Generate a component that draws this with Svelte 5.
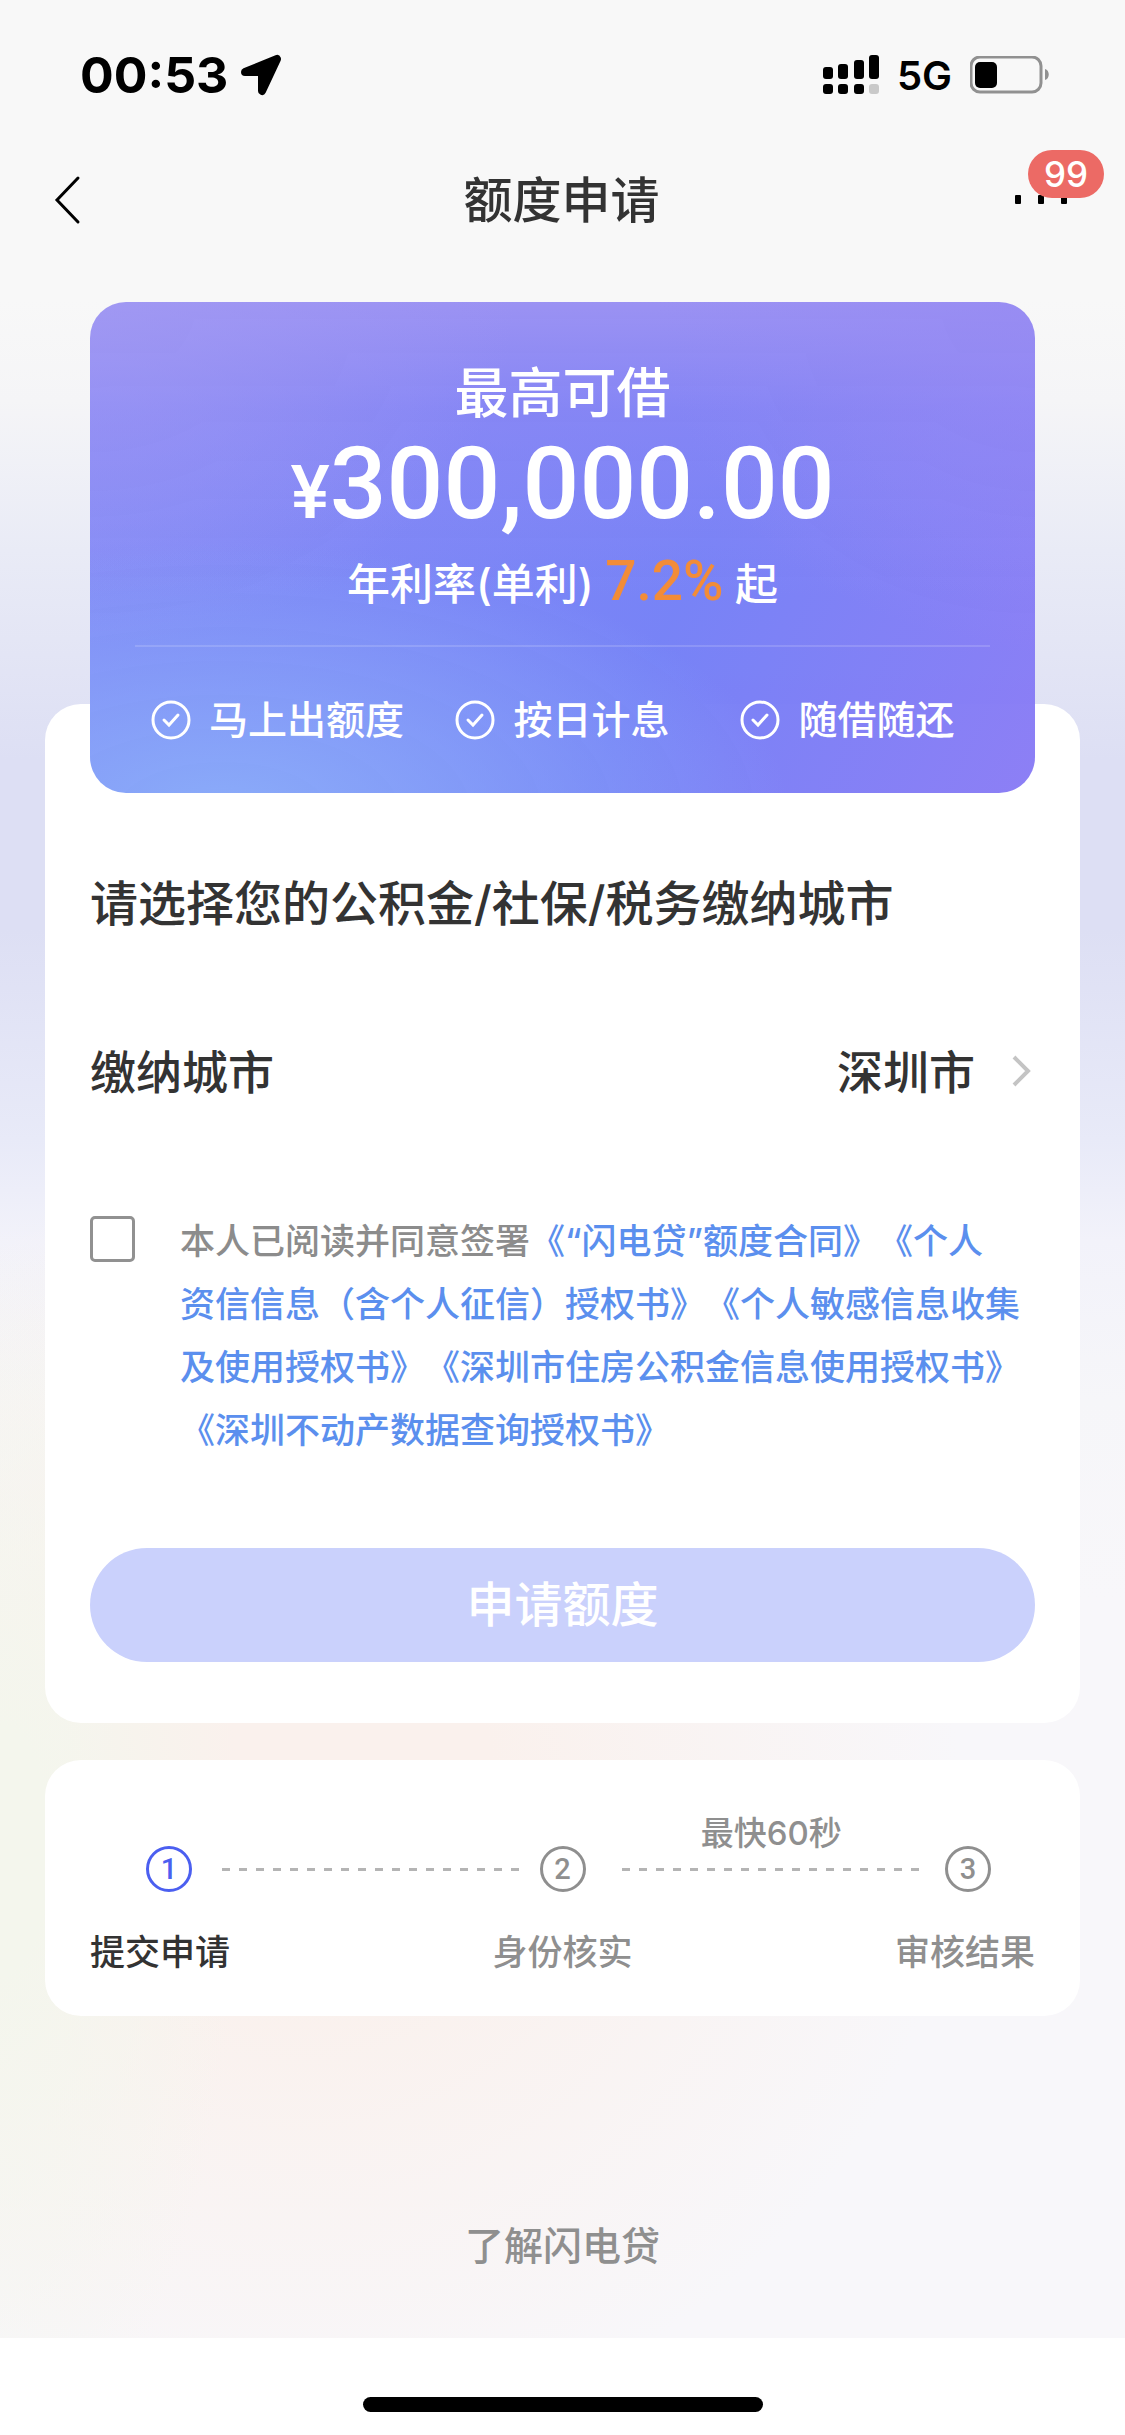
<script>
  let agreed = false

  const features = ['马上出额度', '按日计息', '随借随还']
  const steps = ['提交申请', '身份核实', '审核结果']
  const signal = [
    { x: 0, y: 12, height: 12 },
    { x: 15, y: 9, height: 15 },
    { x: 31, y: 5, height: 19 },
    { x: 46, y: 0, height: 24 },
  ]
</script>

<div class="page">
  <div class="status-bar">
    <div class="clock">
      <span class="time">00:53</span>
      <svg width="42" height="42" viewBox="0 0 42 42">
        <path d="M37 5 L22 37 V18 H5 Z" stroke="#000" stroke-width="8" stroke-linejoin="round" />
      </svg>
    </div>
    <div class="indicators">
      <svg width="56" height="40" viewBox="0 0 56 40">
        {#each signal as bar, i}
          <rect x={bar.x} y={bar.y} width="10" height={bar.height} rx="3" />
          <rect x={bar.x} y="29" width="10" height="10" rx="3" fill={i === 3 ? '#c9c9c9' : '#000'} />
        {/each}
      </svg>
      <span class="network">5G</span>
      <svg width="80" height="38" viewBox="0 0 80 38">
        <rect x="1" y="1" width="70" height="35" rx="9" fill="none" stroke="#919191" stroke-width="3" />
        <rect x="5" y="6" width="22" height="26" rx="5" />
        <path d="M75 13 C80 14 80 23 75 24 Z" fill="#919191" />
      </svg>
    </div>
  </div>

  <header class="nav">
    <button class="back" aria-label="返回">
      <svg width="28" height="50" viewBox="0 0 28 50">
        <path d="M24 3 L3 25 L24 47" fill="none" stroke="#000" stroke-width="3" stroke-linecap="round" />
      </svg>
    </button>
    <h1>额度申请</h1>
    <button class="more" aria-label="更多">
      <svg width="54" height="10" viewBox="0 0 54 10">
        <rect x="0" width="6" height="9" rx="1" />
        <rect x="23" width="6" height="9" rx="1" />
        <rect x="46" width="6" height="9" rx="1" />
      </svg>
      <span class="badge">99</span>
    </button>
  </header>

  <main>
    <section class="hero">
      <h2>最高可借</h2>
      <p class="amount"><span class="currency">¥</span>300,000.00</p>
      <p class="rate">年利率(单利) <strong>7.2%</strong> 起</p>
      <ul class="features">
        {#each features as feature}
          <li>
            <svg width="40" height="40" viewBox="0 0 40 40" fill="none" stroke="#fff">
              <circle cx="20" cy="20" r="18" stroke-width="3" />
              <path d="M13 20 L18 25 L27 15" stroke-width="3" stroke-linecap="round" />
            </svg>
            {feature}
          </li>
        {/each}
      </ul>
    </section>

    <section class="card form">
      <h3>请选择您的公积金/社保/税务缴纳城市</h3>
      <button class="city">
        <span>缴纳城市</span>
        <span class="value">深圳市</span>
        <svg width="24" height="36" viewBox="0 0 24 36">
          <path d="M3 3 L17 17 L3 31" fill="none" stroke="#c4c4c4" stroke-width="4" />
        </svg>
      </button>
      <div class="agreement">
        <input id="agree" type="checkbox" bind:checked={agreed} />
        <p>
          <label for="agree">本人已阅读并同意签署</label><a href="#contract">《“闪电贷”额度合同》</a><a
            href="#credit">《个人<br />资信信息（含个人征信）授权书》</a
          ><a href="#sensitive">《个人敏感信息收集及使用授权书》</a><a href="#fund"
            >《深圳市住房公积金信息使用授权书》</a
          ><a href="#estate">《深圳不动产数据查询授权书》</a>
        </p>
      </div>
      <button class="submit" disabled={!agreed}>申请额度</button>
    </section>

    <section class="card steps">
      <div class="track">
        <span class="dot active">1</span>
        <div class="line"></div>
        <span class="dot">2</span>
        <div class="line timed"><span class="hint">最快60秒</span></div>
        <span class="dot">3</span>
      </div>
      <div class="labels">
        {#each steps as step, i}
          <span class:current={i === 0}>{step}</span>
        {/each}
      </div>
    </section>

    <a class="learn" href="#about">了解闪电贷</a>
  </main>

  <footer>
    <div class="home-indicator"></div>
  </footer>
</div>

<style>
  :global(body) {
    background: #fff;
  }

  .page {
    min-height: 100vh;
    display: flex;
    flex-direction: column;
    font-family: Inter, 'Noto Sans CJK SC', sans-serif;
    font-weight: 500;
    color: #333;
    text-spacing-trim: space-all;
    background:
      radial-gradient(ellipse 240px 620px at 0 1850px, #f4f6ed 20%, #f4f6ed00 100%),
      radial-gradient(ellipse 660px 640px at 300px 1800px, #faf1ed 30%, #faf1ed00 100%),
      linear-gradient(
        #f8f8f8 300px,
        #f5f5f7 400px,
        #e9ebf6 550px,
        #dddff4 760px,
        #dddff4 930px,
        #e8eaf8 1140px,
        #f2f2fa 1240px,
        #f6f6f9 1400px,
        #f8f7fa 1600px
      );
  }

  h1,
  h2,
  h3,
  p,
  ul {
    margin: 0;
    padding: 0;
    font-weight: 500;
  }

  button {
    font: inherit;
    color: inherit;
    background: none;
    border: none;
    padding: 0;
  }

  a {
    color: #5b8fee;
    text-decoration: none;
  }

  svg {
    display: block;
    flex-shrink: 0;
  }

  .status-bar {
    display: flex;
    justify-content: space-between;
    align-items: center;
    height: 150px;
    padding: 0 75px 0 80px;
    color: #000;
  }

  .clock,
  .indicators {
    display: flex;
    align-items: center;
  }

  .clock {
    gap: 12px;
  }

  .indicators {
    gap: 18px;
  }

  .time {
    font-size: 50px;
    font-weight: 700;
  }

  .network {
    font-size: 40px;
    font-weight: 600;
  }

  .nav {
    display: grid;
    grid-template-columns: 1fr auto 1fr;
    align-items: center;
    height: 100px;
    padding: 0 56px 0 54px;
    margin-bottom: 52px;
  }

  .back {
    justify-self: start;
  }

  h1 {
    padding-bottom: 7px;
    font-size: 49px;
  }

  .more {
    position: relative;
    justify-self: end;
  }

  .badge {
    position: absolute;
    left: 13px;
    bottom: 7px;
    padding: 0 16px;
    border-radius: 24px;
    background: #ec6a65;
    color: #fff;
    font-size: 35px;
    line-height: 48px;
  }

  main {
    flex: 1;
    display: flex;
    flex-direction: column;
    padding: 0 45px;
  }

  .hero {
    position: relative;
    box-sizing: border-box;
    margin: 0 45px;
    padding: 52px 45px 43px;
    border-radius: 36px;
    color: #fff;
    text-align: center;
    background:
      radial-gradient(ellipse 60% 55% at 14% 104%, #8aabf9 0, #8aabf900 100%),
      radial-gradient(ellipse 45% 70% at 0 0, #a39bf3aa 0, #a39bf300 100%),
      radial-gradient(ellipse 40% 70% at 100% 0, #978af3aa 0, #978af300 100%),
      linear-gradient(#9b92f3 0, #8d86f499 22%, #8d86f400 60%),
      linear-gradient(115deg, #7d88f6f7 10%, #737ff6f7 62%, #887bf5f7 98%);
  }

  h2 {
    font-size: 54px;
    line-height: 80px;
  }

  .amount {
    font-family: Roboto, sans-serif;
    font-size: 100px;
    line-height: 100px;
  }

  .currency {
    font-size: 74px;
  }

  .rate {
    font-size: 43px;
    line-height: 82px;
  }

  .rate strong {
    font-family: Roboto, sans-serif;
    font-size: 55px;
    font-weight: 500;
    line-height: 1;
    color: #f28c38;
  }

  .features {
    display: grid;
    grid-template-columns: repeat(3, 1fr);
    margin-top: 20px;
    padding-top: 43px;
    border-top: 2px solid #ffffff26;
    list-style: none;
    font-size: 39px;
    line-height: 60px;
  }

  .features li {
    display: flex;
    align-items: center;
    justify-content: center;
    gap: 18px;
  }

  .card {
    border-radius: 36px;
    background: #fff;
  }

  .form {
    display: flex;
    flex-direction: column;
    margin-top: -89px;
    padding: 164px 45px 61px;
  }

  h3 {
    font-size: 48px;
    line-height: 72px;
  }

  .city {
    display: flex;
    align-items: center;
    margin-top: 96px;
    font-size: 46px;
    line-height: 72px;
  }

  .value {
    margin-left: auto;
    margin-right: 36px;
  }

  .agreement {
    display: flex;
    align-items: flex-start;
    gap: 45px;
    margin-top: 102px;
    font-size: 35px;
    line-height: 63px;
    color: #8c8c8c;
  }

  .agreement input {
    appearance: none;
    flex-shrink: 0;
    box-sizing: border-box;
    width: 45px;
    height: 46px;
    margin: 6px 0 0;
    border: 3px solid #919191;
    border-radius: 5px;
  }

  .agreement input:checked {
    background: #4b5ff0;
  }

  .submit {
    margin-top: 86px;
    border-radius: 57px;
    background: #4b5ff0;
    color: #fff;
    font-size: 48px;
    line-height: 114px;
  }

  .submit:disabled {
    background: #cad1fc;
  }

  .steps {
    margin-top: 37px;
    padding: 86px 45px 37px;
  }

  .track {
    display: flex;
    align-items: center;
    padding: 0 44px 0 56px;
  }

  .dot {
    display: grid;
    place-items: center;
    box-sizing: border-box;
    width: 46px;
    height: 46px;
    border: 3px solid #8f8f8f;
    border-radius: 50%;
    color: #8f8f8f;
    font-family: Roboto, sans-serif;
    font-size: 29px;
    line-height: 1;
  }

  .dot.active {
    border-color: #4b5ff0;
    color: #4b5ff0;
  }

  .line {
    position: relative;
    flex: 1;
    height: 3px;
    margin: 0 18px 0 30px;
    background: repeating-linear-gradient(90deg, #b4b4b4 0 8px, transparent 8px 17px);
  }

  .timed {
    margin: 0 24px 0 36px;
  }

  .hint {
    position: absolute;
    bottom: 16px;
    width: 100%;
    text-align: center;
    font-size: 33px;
    color: #8f8f8f;
  }

  .labels {
    display: flex;
    justify-content: space-between;
    margin-top: 34px;
    font-size: 35px;
    line-height: 53px;
    color: #8f8f8f;
  }

  .labels .current {
    color: #333;
  }

  .learn {
    margin: 200px auto 62px;
    font-size: 39px;
    line-height: 60px;
    color: #8f8f8f;
  }

  footer {
    padding: 59px 0 23px;
    background: #fff;
  }

  .home-indicator {
    width: 400px;
    height: 15px;
    margin: 0 auto;
    border-radius: 8px;
    background: #000;
  }
</style>
